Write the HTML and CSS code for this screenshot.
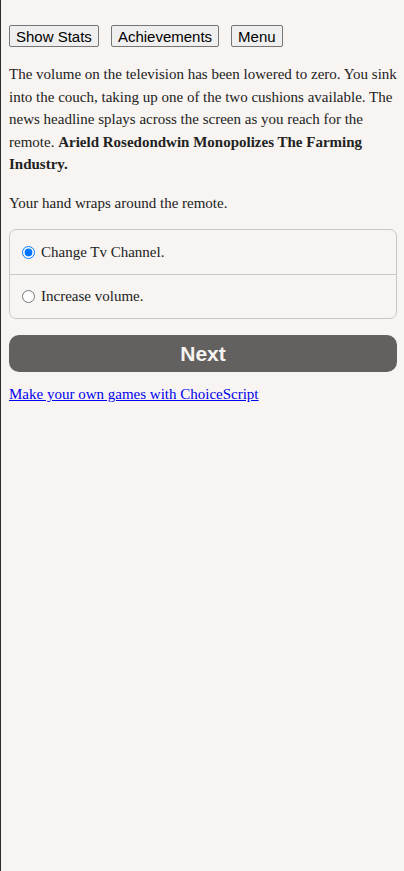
FILE: index.html
```html
<!DOCTYPE html>
<html lang="en">
<head>
<meta charset="utf-8">
<title>ChoiceScript Game</title>
<link rel="stylesheet" href="styles.css">
</head>
<body>
<div class="container">
  <div class="toolbar">
    <button class="tool-btn">Show Stats</button>
    <button class="tool-btn">Achievements</button>
    <button class="tool-btn">Menu</button>
  </div>
  <div class="story">
    <p>The volume on the television has been lowered to zero. You sink into the couch, taking up one of the two cushions available. The news headline splays across the screen as you reach for the remote. <b>Arield Rosedondwin Monopolizes The Farming Industry.</b></p>
    <p>Your hand wraps around the remote.</p>
  </div>
  <form class="choices">
    <label class="choice"><input type="radio" name="choice" checked> Change Tv Channel.</label>
    <label class="choice"><input type="radio" name="choice"> Increase volume.</label>
  </form>
  <button class="next-btn">Next</button>
  <p class="credit"><a href="#">Make your own games with ChoiceScript</a></p>
</div>
</body>
</html>
```
FILE: styles.css
```css
html, body {
  margin: 0;
  padding: 0;
  background: #f7f4f1;
}

.container {
  min-height: 100vh;
  box-sizing: border-box;
  border-left: 1px solid #2b2b2b;
  padding: 25px 7px 8px 8px;
  font-family: "Liberation Serif", "Times New Roman", serif;
  font-size: 15px;
  color: #222;
}

.toolbar {
  display: flex;
  gap: 12px;
}

.tool-btn {
  font-family: "Liberation Sans", Arial, sans-serif;
  font-size: 15px;
  padding: 1px 6px;
  height: 22px;
  color: #000;
  background: #efefef;
  border: 1px solid #767676;
  border-radius: 2px;
}

.story p {
  margin: 16px 0;
  line-height: 22.5px;
}

.story p:last-child {
  margin-bottom: 15px;
}

.choices {
  border: 1px solid #c8c8c8;
  border-radius: 7px;
  overflow: hidden;
}

.choice {
  display: flex;
  align-items: center;
  gap: 6px;
  height: 44px;
  padding: 0 12px;
  box-sizing: border-box;
}

.choice + .choice {
  border-top: 1px solid #c8c8c8;
}

.choice input {
  margin: 0;
  width: 13px;
  height: 13px;
}

.next-btn {
  display: block;
  width: 100%;
  margin-top: 16px;
  height: 37px;
  background: #63615f;
  color: #f7f4f1;
  border: none;
  border-radius: 10px;
  font-family: "Liberation Sans", Arial, sans-serif;
  font-size: 21px;
  font-weight: bold;
}

.credit {
  margin: 14px 0;
}

.credit a {
  color: #0000ee;
}
```
